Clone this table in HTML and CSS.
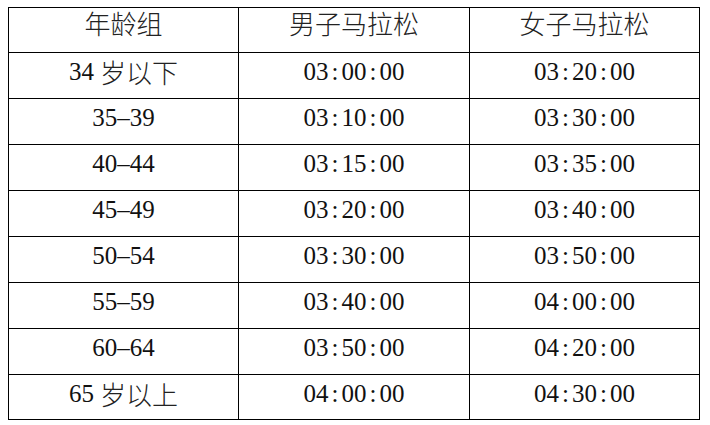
FILE: index.html
```html
<!DOCTYPE html>
<html>
<head>
<meta charset="utf-8">
<title>Marathon age groups</title>
<link rel="stylesheet" href="styles.css">
</head>
<body>
<div class="sheet">
  <div class="cell head"><span class="cjk">年龄组</span></div>
  <div class="cell head"><span class="cjk">男子马拉松</span></div>
  <div class="cell head"><span class="cjk">女子马拉松</span></div>

  <div class="cell"><span class="num">34</span> <span class="cjk">岁以下</span></div>
  <div class="cell"><span class="num">03<span class="c">:</span>00<span class="c">:</span>00</span></div>
  <div class="cell"><span class="num">03<span class="c">:</span>20<span class="c">:</span>00</span></div>

  <div class="cell"><span class="num">35–39</span></div>
  <div class="cell"><span class="num">03<span class="c">:</span>10<span class="c">:</span>00</span></div>
  <div class="cell"><span class="num">03<span class="c">:</span>30<span class="c">:</span>00</span></div>

  <div class="cell"><span class="num">40–44</span></div>
  <div class="cell"><span class="num">03<span class="c">:</span>15<span class="c">:</span>00</span></div>
  <div class="cell"><span class="num">03<span class="c">:</span>35<span class="c">:</span>00</span></div>

  <div class="cell"><span class="num">45–49</span></div>
  <div class="cell"><span class="num">03<span class="c">:</span>20<span class="c">:</span>00</span></div>
  <div class="cell"><span class="num">03<span class="c">:</span>40<span class="c">:</span>00</span></div>

  <div class="cell"><span class="num">50–54</span></div>
  <div class="cell"><span class="num">03<span class="c">:</span>30<span class="c">:</span>00</span></div>
  <div class="cell"><span class="num">03<span class="c">:</span>50<span class="c">:</span>00</span></div>

  <div class="cell"><span class="num">55–59</span></div>
  <div class="cell"><span class="num">03<span class="c">:</span>40<span class="c">:</span>00</span></div>
  <div class="cell"><span class="num">04<span class="c">:</span>00<span class="c">:</span>00</span></div>

  <div class="cell"><span class="num">60–64</span></div>
  <div class="cell"><span class="num">03<span class="c">:</span>50<span class="c">:</span>00</span></div>
  <div class="cell"><span class="num">04<span class="c">:</span>20<span class="c">:</span>00</span></div>

  <div class="cell"><span class="num">65</span> <span class="cjk">岁以上</span></div>
  <div class="cell"><span class="num">04<span class="c">:</span>00<span class="c">:</span>00</span></div>
  <div class="cell"><span class="num">04<span class="c">:</span>30<span class="c">:</span>00</span></div>
</div>
</body>
</html>
```

FILE: styles.css
```css
body {
  margin: 0;
  background: #ffffff;
}

.sheet {
  display: grid;
  grid-template-columns: 230px 231px 230px;
  grid-template-rows: 45px repeat(7, 46px) 45px;
  width: 691px;
  margin: 7px 0 0 8px;
  border-left: 1px solid #000;
  border-top: 1px solid #000;
  font-size: 25px;
  color: #111;
}

.cell {
  display: flex;
  align-items: center;
  justify-content: center;
  border-right: 1px solid #000;
  border-bottom: 1px solid #000;
  line-height: 25px;
  padding-bottom: 8px;
  white-space: nowrap;
  font-family: "Liberation Serif", serif;
}

.cell.head {
  padding-bottom: 15px;
}

.num {
  font-family: "Liberation Serif", serif;
  font-size: 25px;
}

.cjk {
  font-family: "Noto Sans CJK SC", sans-serif;
  font-size: 26px;
  font-weight: 300;
  line-height: 25px;
  color: #222;
  margin-left: 6px;
}

.head .cjk {
  margin-left: 0;
}

.c {
  padding: 0 3px;
}
```
